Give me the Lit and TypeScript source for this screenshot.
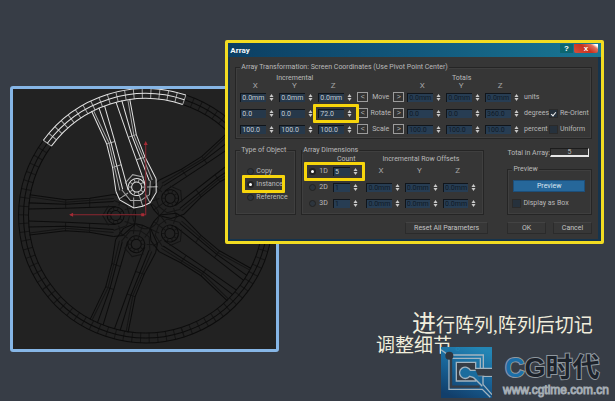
import { LitElement, html, svg, css } from "lit";
import { customElement, property } from "lit/decorators.js";

const AXES = ["X", "Y", "Z"];

/* ---------- 3ds-style numeric spinner ---------- */
@customElement("num-field")
class NumField extends LitElement {
  @property() value = "";
  @property() name = "";
  @property({ type: Boolean, reflect: true }) dim = false;

  static styles = css`
    :host {
      display: flex;
      align-items: center;
      gap: 3px;
      padding-right: 5px;
      min-width: 0;
    }
    .box {
      flex: 1;
      min-width: 0;
      width: 0;
      height: 9px;
      box-sizing: border-box;
      margin: 0;
      padding: 0 0 0 1px;
      border: 0;
      border-top: 1px solid #10151b;
      border-left: 1px solid #10151b;
      background: #26384a;
      color: #c3ccd3;
      font: 7px/8px Roboto, "Liberation Sans", sans-serif;
    }
    :host([dim]) .box {
      background: #273d53;
      color: #0f1a26;
    }
    .arrows {
      display: flex;
      flex-direction: column;
      gap: 1px;
      width: 5px;
    }
    .step {
      display: block;
      width: 5px;
      height: 3px;
      padding: 0;
      border: 0;
      background: none;
    }
    .tri {
      display: block;
      fill: #c9c9c9;
    }
  `;

  render() {
    return html`
      <input class="box" type="text" aria-label=${this.name} .value=${this.value} ?readonly=${this.dim} />
      <span class="arrows">
        <button class="step" aria-label="Increase ${this.name}">
          <svg class="tri" width="5" height="3" viewBox="0 0 10 6"><path d="M5 0 9 6H1z" /></svg>
        </button>
        <button class="step" aria-label="Decrease ${this.name}">
          <svg class="tri" width="5" height="3" viewBox="0 0 10 6"><path d="M1 0h8L5 6z" /></svg>
        </button>
      </span>
    `;
  }
}

/* ---------- wheel wireframe ---------- */
@customElement("wheel-view")
class WheelView extends LitElement {
  static styles = css`
    :host {
      display: block;
    }
    .view {
      display: block;
      width: 100%;
      background: #222222;
    }
    .mesh {
      fill: none;
      stroke: #0c0c0c;
      stroke-width: 1;
    }
    .faint {
      stroke: #141414;
    }
    .lit {
      stroke: #e2e2e2;
    }
    .lit .faint {
      stroke: #a6a6a6;
    }
    .gizmo {
      fill: none;
      stroke: #8d2731;
      stroke-width: 1;
    }
    .tip {
      fill: #a52b35;
    }
  `;

  private at(r: number, deg: number) {
    const a = (deg * Math.PI) / 180;
    return `${(r * Math.sin(a)).toFixed(1)} ${(-r * Math.cos(a)).toFixed(1)}`;
  }

  private rim() {
    const start = -36;
    const end = 36;
    let d = "";
    for (const r of [127, 122, 117]) {
      d += `M${this.at(r, start)}A${r} ${r} 0 0 1 ${this.at(r, end)}`;
    }
    let ticks = "";
    for (let i = 0; i <= 18; i++) {
      const a = start + i * 4;
      ticks += `M${this.at(127, a)}L${this.at(117, a)}`;
    }
    return svg`<path class="faint" d=${ticks} /><path d=${d} />`;
  }

  private arm(s: number) {
    const d = `M${20 * s} -116L${15.5 * s} -80L${17 * s} -56L${21 * s} -32
      M${12 * s} -117L${11 * s} -80L${14 * s} -32
      M${6 * s} -117L${7 * s} -80L${9 * s} -30`;
    const side = `M${18 * s} -116L${13 * s} -80L${17 * s} -32`;
    const cross = `M${7 * s} -80L${15.5 * s} -80M${8 * s} -56L${17 * s} -56`;
    return svg`<path class="faint" d=${side + cross} /><path d=${d} />`;
  }

  private segment(turn: number, lit: boolean) {
    let bolt = "";
    for (let a = 0; a < 360; a += 36) {
      const x = (r: number) => (r * Math.sin((a * Math.PI) / 180)).toFixed(1);
      const y = (r: number) => (-30 - r * Math.cos((a * Math.PI) / 180)).toFixed(1);
      bolt += `M${x(5)} ${y(5)}L${x(8)} ${y(8)}`;
    }
    return svg`
      <g class=${lit ? "mesh lit" : "mesh"} transform="rotate(${turn})">
        ${this.rim()}${this.arm(-1)}${this.arm(1)}
        <circle cx="0" cy="-30" r="8.5" />
        <circle cx="0" cy="-30" r="5" />
        <path class="faint" d=${bolt} />
        <path class="faint" d="M-15 -32L-10 -19L0 -16L10 -19L15 -32M-20 -24L-10 -27M-9 -11L-6 -21M8 -11L6 -21M20 -24L10 -27M0 -10V-21M-10 -37L0 -43L10 -37" />
        <path d="M-21 -32L-20 -23L-9 -11L0 -10L8 -11L17 -19L21 -32" />
      </g>`;
  }

  render() {
    const turns = [54.4, 126.4, 198.4, 270.4];
    return html`
      <svg class="view" viewBox="0 0 263 260" role="img" aria-label="Wheel wireframe">
        <g transform="translate(132.5 126.5)">
          ${turns.map((t) => this.segment(t, false))}
          <circle class="mesh faint" r="13" />
          ${this.segment(-17.6, true)}
        </g>
        <path class="gizmo" d="M57 125.5H132.5V54" />
        <path class="tip" d="M56 125.5l4-2v4zM132.5 52l2 4h-4zM128 124h3v3h-3z" />
      </svg>
    `;
  }
}

/* ---------- Array dialog ---------- */
@customElement("array-dialog")
class ArrayDialog extends LitElement {
  static styles = css`
    :host {
      display: block;
      border: 3px solid #f2dc22;
      border-radius: 2px;
      background: #16344c;
      color: #bababa;
      font: 7px/8px Roboto, "Liberation Sans", sans-serif;
      white-space: nowrap;
    }
    .bar {
      display: flex;
      justify-content: space-between;
      align-items: flex-start;
      height: 14px;
      padding: 1px 3px 0 2px;
      box-sizing: border-box;
      background: linear-gradient(90deg, #0c3f63, #12587c 50%, #197794);
    }
    .title {
      margin: 0;
      color: #f4f8fa;
      font: bold 8px/14px Roboto, "Liberation Sans", sans-serif;
    }
    .sys {
      display: flex;
      gap: 1px;
    }
    .sysbtn {
      width: 13px;
      height: 9px;
      padding: 0;
      border: 0;
      background: #0c6670;
      color: #ffffff;
      font: bold 8px/9px "Liberation Sans", sans-serif;
    }
    .close {
      width: 24px;
      border-radius: 0 0 2px 2px;
      background: linear-gradient(215deg, #ffffff 10%, #e0705c 22%, #c8321f 50%, #d8503c);
    }
    .body {
      margin: 0 3px 2px 2px;
      padding: 6px 6px 5px 5px;
      background: #363636;
      display: flex;
      flex-direction: column;
      gap: 7px;
    }
    .group {
      min-width: 0;
      margin: 0;
      padding: 2px 0 1px 4px;
      border: 1px solid #252525;
      box-shadow: inset 0 0 0 1px #3f3f3f;
    }
    .legend {
      padding: 0 1px;
      background: #363636;
    }
    .xform {
      display: grid;
      grid-template-columns: repeat(3, 39fr) 11fr 25fr 14fr repeat(3, 39fr) 26fr 41fr;
      grid-template-rows: 9px 7px repeat(3, 16px);
      align-items: center;
    }
    .span3 {
      grid-column: 1 / 4;
      text-align: center;
      padding-right: 8px;
    }
    .totals {
      grid-column: 7 / 10;
    }
    .rest {
      grid-column: 10 / 12;
    }
    .axis {
      text-align: center;
      padding-right: 9px;
      font-size: 8px;
      color: #a5a5a5;
    }
    .op {
      text-align: center;
    }
    .dir {
      width: 11px;
      height: 10px;
      padding: 0;
      border: 1px solid #9c9c9c;
      background: #333333;
      color: #b9b9b9;
      font: 7px/8px "Liberation Sans", sans-serif;
    }
    .cell {
      position: relative;
    }
    .ring::after {
      content: "";
      position: absolute;
      inset: -5px -2px -5px -5px;
      border: 3px solid #f7d50c;
      border-radius: 1px;
      pointer-events: none;
    }
    .check {
      display: flex;
      align-items: center;
      gap: 3px;
    }
    .tick {
      appearance: none;
      flex: none;
      width: 7px;
      height: 7px;
      margin: 0;
      background: #26313c;
      box-shadow: 0 0 0 1px #2a2a2a;
      display: grid;
      place-items: center;
    }
    .tick:checked::before {
      content: "";
      width: 2px;
      height: 4px;
      border: solid #f0f0f0;
      border-width: 0 1px 1px 0;
      transform: rotate(40deg);
    }
    .dot {
      appearance: none;
      flex: none;
      width: 7px;
      height: 7px;
      margin: 0;
      border-radius: 50%;
      border: 1px solid #222222;
      box-sizing: border-box;
      background: #2d353d;
    }
    .dot:checked {
      border: 2px solid #222222;
      background: #ffffff;
    }
    .lower {
      display: grid;
      grid-template-columns: 62fr 186fr 99fr;
      column-gap: 5px;
    }
    .kinds {
      display: flex;
      flex-direction: column;
      align-items: flex-start;
      gap: 5px;
      padding: 11px 0 12px 7px;
    }
    .kinds .check {
      gap: 2px;
    }
    .dimgroup {
      padding: 0;
    }
    .dims {
      display: grid;
      grid-template-columns: 24fr 34fr repeat(3, 39fr);
      grid-template-rows: 9px repeat(3, 16px);
      padding: 0 2px 0 7px;
      align-items: center;
    }
    .dimhead {
      grid-column: 3 / 6;
      text-align: center;
      padding-right: 6px;
    }
    .count {
      padding-left: 4px;
    }
    .one {
      grid-column: 1 / 3;
      display: grid;
      grid-template-columns: 24fr 31fr;
      align-items: center;
      margin-right: 3px;
    }
    .num {
      margin-right: 3px;
    }
    .side {
      padding-left: 14px;
      display: flex;
      flex-direction: column;
      justify-content: space-between;
    }
    .total {
      display: flex;
      align-items: center;
      justify-content: space-between;
      padding: 2px 3px 0 4px;
    }
    .shown {
      margin-left: 4px;
    }
    .sum {
      width: 39px;
      height: 9px;
      box-sizing: border-box;
      border: 1px solid #1c1c1c;
      border-right: 1px solid #e6e6e6;
      border-bottom: 2px solid #e6e6e6;
      text-align: center;
      line-height: 7px;
    }
    .preview {
      padding: 5px 6px 6px 1px;
      display: flex;
      flex-direction: column;
      gap: 7px;
    }
    .push {
      height: 12px;
      padding: 0;
      border: 1px solid #2b2b2b;
      border-top-color: #434343;
      background: #373737;
      color: #c4c4c4;
      font: 7px/8px Roboto, "Liberation Sans", sans-serif;
    }
    .blue {
      background: #26679a;
      border-color: #1d4f7a;
      color: #dce8f2;
    }
    .foot {
      display: grid;
      grid-template-columns: 170fr 83fr 19fr 39fr 7fr 39fr;
    }
    .reset {
      grid-column: 2;
    }
    .ok {
      grid-column: 4;
    }
    .cancel {
      grid-column: 6;
    }
  `;

  private xformRow(op: string, vals: string[], totals: string[], unit: string, last: unknown, ringed = false) {
    return html`
      ${vals.map(
        (v, i) => html`<num-field
          class=${ringed && i === 2 ? "cell ring" : "cell"}
          name="${op} ${AXES[i]}"
          value=${v}
        ></num-field>`
      )}
      <button class="dir" aria-label="${op} incremental">&lt;</button>
      <span class="op">${op}</span>
      <button class="dir" aria-label="${op} totals">&gt;</button>
      ${totals.map((v, i) => html`<num-field dim name="${op} total ${AXES[i]}" value=${v}></num-field>`)}
      <span>${unit}</span>
      ${last}
    `;
  }

  private dimRow(label: string, count: string) {
    return html`
      <label class="check"><input class="dot" type="radio" name="dim" />${label}</label>
      <num-field class="num" dim name="${label} count" value=${count}></num-field>
      ${AXES.map((a) => html`<num-field dim name="${label} offset ${a}" value="0.0mm"></num-field>`)}
    `;
  }

  render() {
    const axes = AXES.map((a) => html`<span class="axis">${a}</span>`);
    return html`
      <header class="bar">
        <h1 class="title">Array</h1>
        <div class="sys">
          <button class="sysbtn" aria-label="Help">?</button>
          <button class="sysbtn close" aria-label="Close">x</button>
        </div>
      </header>
      <div class="body">
        <fieldset class="group">
          <legend class="legend">Array Transformation: Screen Coordinates (Use Pivot Point Center)</legend>
          <div class="xform">
            <span class="span3">Incremental</span><span class="span3 totals">Totals</span><span class="rest"></span>
            ${axes}<span></span><span></span><span></span>${axes}<span class="rest"></span>
            ${this.xformRow("Move", ["0.0mm", "0.0mm", "0.0mm"], ["0.0mm", "0.0mm", "0.0mm"], "units", html`<span></span>`)}
            ${this.xformRow("Rotate", ["0.0", "0.0", "72.0"], ["0.0", "0.0", "360.0"], "degrees",
              html`<label class="check"><input class="tick" type="checkbox" checked />Re-Orient</label>`, true)}
            ${this.xformRow("Scale", ["100.0", "100.0", "100.0"], ["100.0", "100.0", "100.0"], "percent",
              html`<label class="check"><input class="tick" type="checkbox" />Uniform</label>`)}
          </div>
        </fieldset>
        <div class="lower">
          <fieldset class="group">
            <legend class="legend">Type of Object</legend>
            <div class="kinds">
              <label class="check cell"><input class="dot" type="radio" name="kind" />Copy</label>
              <label class="check cell ring"><input class="dot" type="radio" name="kind" checked />Instance</label>
              <label class="check cell"><input class="dot" type="radio" name="kind" />Reference</label>
            </div>
          </fieldset>
          <fieldset class="group dimgroup">
            <legend class="legend">Array Dimensions</legend>
            <div class="dims">
              <span></span><span class="count">Count</span><span class="dimhead">Incremental Row Offsets</span>
              <div class="one cell ring">
                <label class="check"><input class="dot" type="radio" name="dim" checked />1D</label>
                <num-field name="1D count" value="5"></num-field>
              </div>
              ${axes}
              ${this.dimRow("2D", "1")} ${this.dimRow("3D", "1")}
            </div>
          </fieldset>
          <div class="side">
            <div class="total"><span>Total in Array:</span><output class="sum">5</output></div>
            <fieldset class="group shown">
              <legend class="legend">Preview</legend>
              <div class="preview">
                <button class="push blue">Preview</button>
                <label class="check"><input class="tick" type="checkbox" />Display as Box</label>
              </div>
            </fieldset>
          </div>
        </div>
        <div class="foot">
          <button class="push reset">Reset All Parameters</button>
          <button class="push ok">OK</button>
          <button class="push cancel">Cancel</button>
        </div>
      </div>
    `;
  }
}

/* ---------- slide ---------- */
@customElement("app-root")
class AppRoot extends LitElement {
  static styles = css`
    :host {
      display: block;
      min-height: 100vh;
      background: #373d46;
    }
    .slide {
      display: grid;
      grid-template-columns: 215fr 54fr 324fr;
      padding: 0 11px 0 10px;
      align-items: start;
    }
    .figure {
      grid-area: 1 / 1 / 2 / 3;
      margin: 86px 0 0;
      border: 3px solid #86b6e6;
      border-radius: 3px;
    }
    .stack {
      grid-area: 1 / 2 / 2 / 4;
      display: flex;
      flex-direction: column;
      margin-top: 40px;
    }
    .note {
      align-self: flex-end;
      margin: 70px 6px 0 0;
      color: #f1eedc;
      font: 19px/20px "Liberation Serif", "Noto Sans CJK SC", sans-serif;
      text-indent: 36px;
      white-space: nowrap;
      width: 222px;
    }
    .big {
      font-size: 24px;
    }
    .brand {
      align-self: flex-end;
      display: flex;
      gap: 11px;
      margin: -9px -5px 0 0;
      position: relative;
    }
    .words {
      display: flex;
      flex-direction: column;
      padding-top: 6px;
    }
    .name {
      padding-left: 2px;
      color: #1d232b;
      font: bold 27px/30px "Liberation Sans", "Noto Sans CJK SC", sans-serif;
      -webkit-text-stroke: 2px #8f989f;
      paint-order: stroke fill;
      white-space: nowrap;
    }
    .c {
      color: #1c6fa8;
    }
    .site {
      color: #2f353c;
      font: 12px/14px "Liberation Sans", sans-serif;
      -webkit-text-stroke: 1px #a5adb4;
      text-decoration: none;
    }
    .logo {
      display: block;
    }
  `;

  render() {
    return html`
      <main class="slide">
        <figure class="figure"><wheel-view></wheel-view></figure>
        <div class="stack">
          <array-dialog></array-dialog>
          <p class="note"><span class="big">进</span>行阵列,阵列后切记<br />调整细节</p>
          <div class="brand">
            <svg class="logo" width="51" height="51" viewBox="0 0 153 153" aria-hidden="true">
              <defs>
                <linearGradient id="g" x1="0.7" y1="0" x2="0.3" y2="1">
                  <stop offset="0" stop-color="#2385b4" />
                  <stop offset="0.5" stop-color="#186397" />
                  <stop offset="1" stop-color="#123f6b" />
                </linearGradient>
              </defs>
              <path fill="url(#g)" d="M0 0H153V64H126V88H153V153H0z" />
              <path fill="none" stroke="#a3b4c0" stroke-width="4" d="M0 8L22 24H127V64H153M153 88H126V112L153 143M24 26V127H124L148 151" />
              <path fill="none" stroke="#363c45" stroke-width="7" d="M30 34V119H116" />
              <path fill="none" stroke="#a3b4c0" stroke-width="4" d="M34 34H118V64" />
              <path fill="#363c45" stroke="#a3b4c0" stroke-width="4" d="M46 46H104V64H128V86H104V102H46z" />
              <path fill="#363c45" d="M102 66H153V86H102z" />
              <path fill="#1b6c9d" stroke="#a3b4c0" stroke-width="4" d="M104 70H88A17 17 0 1 0 86 88L98 92L124 118" />
              <circle cx="25" cy="26" r="12" fill="#2f353d" />
              <circle cx="50" cy="6" r="5" fill="none" stroke="#2385b4" stroke-width="3" />
            </svg>
            <div class="words">
              <span class="name"><span class="c">C</span>G时代</span>
              <a class="site" href="http://www.cgtime.com.cn">www.cgtime.com.cn</a>
            </div>
          </div>
        </div>
      </main>
    `;
  }
}
